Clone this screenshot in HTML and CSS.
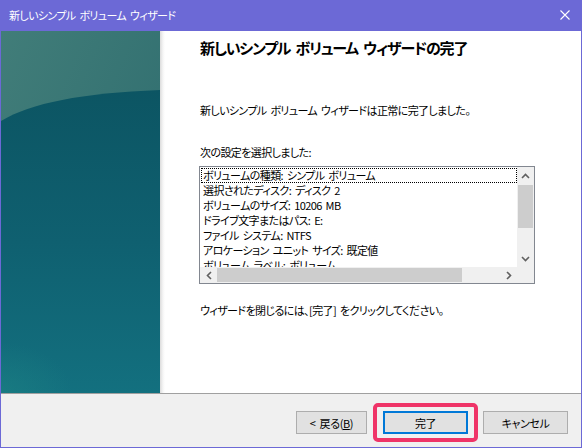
FILE: index.html
```html
<!DOCTYPE html>
<html lang="ja">
<head>
<meta charset="utf-8">
<link rel="stylesheet" href="styles.css">
</head>
<body>
<div class="window">
  <div class="titlebar">
    <span class="title">新しいシンプル ボリューム ウィザード</span>
    <svg class="close" width="10" height="10" viewBox="0 0 10 10"><path d="M0.5 0.5 L9.5 9.5 M9.5 0.5 L0.5 9.5" stroke="#fff" stroke-width="1.1" fill="none"/></svg>
  </div>
  <div class="main">
    <div class="side">
      <svg class="side-art" width="159" height="362" viewBox="0 0 159 362" preserveAspectRatio="none">
        <defs>
          <linearGradient id="top" x1="0" y1="0" x2="1" y2="1">
            <stop offset="0" stop-color="#417d79"/>
            <stop offset="1" stop-color="#2b6a6d"/>
          </linearGradient>
          <linearGradient id="low" x1="0" y1="0" x2="0" y2="1">
            <stop offset="0" stop-color="#0c5563"/>
            <stop offset="0.5" stop-color="#0f6070"/>
            <stop offset="1" stop-color="#13707f"/>
          </linearGradient>
          <radialGradient id="glow" cx="0" cy="1" r="0.45">
            <stop offset="0" stop-color="#1e8584" stop-opacity="0.5"/>
            <stop offset="1" stop-color="#1e8584" stop-opacity="0"/>
          </radialGradient>
        </defs>
        <rect x="0" y="0" width="159" height="362" fill="url(#top)"/>
        <path d="M0 90 C 30 72, 80 62, 159 59 L159 362 L0 362 Z" fill="url(#low)"/>
        <rect x="0" y="250" width="159" height="112" fill="url(#glow)"/>
      </svg>
    </div>
    <div class="content">
      <h1 class="heading">新しいシンプル ボリューム ウィザードの完了</h1>
      <p class="done">新しいシンプル ボリューム ウィザードは正常に完了しました。</p>
      <p class="label">次の設定を選択しました:</p>
      <div class="listbox">
        <div class="list-area">
          <div class="items">
            <div class="item focus">ボリュームの種類: シンプル ボリューム</div>
            <div class="item">選択されたディスク: ディスク 2</div>
            <div class="item">ボリュームのサイズ: 10206 MB</div>
            <div class="item">ドライブ文字またはパス: E:</div>
            <div class="item">ファイル システム: NTFS</div>
            <div class="item">アロケーション ユニット サイズ: 既定値</div>
            <div class="item">ボリューム ラベル: ボリューム</div>
          </div>
          <div class="vscroll">
            <div class="arrow"><svg width="9" height="6" viewBox="0 0 9 6"><path d="M1 5 L4.5 1.5 L8 5" stroke="#606060" stroke-width="1.6" fill="none"/></svg></div>
            <div class="vtrack"><div class="vthumb"></div></div>
            <div class="arrow"><svg width="9" height="6" viewBox="0 0 9 6"><path d="M1 1 L4.5 4.5 L8 1" stroke="#606060" stroke-width="1.6" fill="none"/></svg></div>
          </div>
        </div>
        <div class="hscroll">
          <div class="harrow"><svg width="6" height="9" viewBox="0 0 6 9"><path d="M5 1 L1.5 4.5 L5 8" stroke="#606060" stroke-width="1.6" fill="none"/></svg></div>
          <div class="htrack"><div class="hthumb"></div></div>
          <div class="harrow"><svg width="6" height="9" viewBox="0 0 6 9"><path d="M1 1 L4.5 4.5 L1 8" stroke="#606060" stroke-width="1.6" fill="none"/></svg></div>
          <div class="corner"></div>
        </div>
      </div>
      <p class="close-hint">ウィザードを閉じるには、[完了] をクリックしてください。</p>
    </div>
  </div>
  <div class="footer">
    <button class="btn back">&lt; 戻る(<u>B</u>)</button>
    <div class="finish-wrap">
      <button class="btn finish">完了</button>
      <div class="highlight"></div>
    </div>
    <button class="btn cancel">キャンセル</button>
  </div>
</div>
</body>
</html>
```
FILE: styles.css
```css
* { box-sizing: border-box; }
html, body { margin: 0; padding: 0; }
body {
  width: 582px;
  height: 448px;
  font-family: "Noto Sans CJK JP", "Noto Sans", sans-serif;
  font-feature-settings: "palt";
  font-size: 11px;
  letter-spacing: -0.6px;
  word-spacing: 2px;
  color: #000;
  background: #fff;
}
.window {
  width: 582px;
  height: 448px;
  border: 1px solid #6c69d6;
  border-top: 0;
  display: flex;
  flex-direction: column;
}
.titlebar {
  height: 31px;
  background: #6c69d6;
  display: flex;
  align-items: center;
  justify-content: space-between;
  padding: 0 9px 1px 9px;
  margin: 0 -1px;
}
.title { color: #fff; font-size: 11px; }
.close { margin-right: 3px; }
.main {
  height: 362px;
  display: flex;
}
.side {
  width: 159px;
  flex: none;
  position: relative;
}
.side-art { display: block; }
.content {
  flex: 1;
  padding: 6px 0 0 40px;
  background: linear-gradient(to right, #dcdcdc 0, #f6f6f6 3px, #fff 5px);
}
.heading {
  margin: 0;
  font-size: 15px;
  line-height: 22px;
  font-weight: bold;
  letter-spacing: -1.2px;
  word-spacing: 3px;
}
.done { margin: 43px 0 0; line-height: 16px; }
.label { margin: 26px 0 0; line-height: 16px; }
.listbox {
  margin-top: 6px;
  margin-left: -1px;
  width: 336px;
  height: 118px;
  border: 1px solid #828790;
  background: #fff;
  display: flex;
  flex-direction: column;
}
.list-area { display: flex; height: 100px; }
.items {
  flex: 1;
  padding: 1px 0 0 1px;
  overflow: hidden;
}
.item {
  height: 15px;
  line-height: 15px;
  padding-left: 2px;
  white-space: nowrap;
  overflow: hidden;
}
.item.focus {
  outline: 1px dotted #000;
  outline-offset: -1px;
}
.vscroll {
  width: 17px;
  flex: none;
  background: #f0f0f0;
  display: flex;
  flex-direction: column;
}
.arrow {
  height: 17px;
  display: flex;
  align-items: center;
  justify-content: center;
  flex: none;
}
.vtrack { flex: 1; padding: 1px 1px 0 1px; }
.vthumb { height: 43px; background: #cdcdcd; }
.hscroll {
  height: 16px;
  background: #f0f0f0;
  display: flex;
}
.harrow {
  width: 17px;
  display: flex;
  align-items: center;
  justify-content: center;
  flex: none;
}
.htrack { flex: 1; padding: 1px 0 1px 0; }
.hthumb { width: 245px; height: 100%; background: #cdcdcd; }
.corner { width: 17px; background: #f0f0f0; }
.close-hint { margin: 18px 0 0; line-height: 16px; }
.footer {
  height: 54px;
  background: #f0f0f0;
  border-top: 1px solid #a0a0a0;
  display: flex;
  align-items: flex-start;
  padding: 17px 13px 0 0;
  justify-content: flex-end;
}
.btn {
  font-family: inherit;
  font-feature-settings: "palt";
  font-size: 11px;
  letter-spacing: -0.4px;
  word-spacing: 2px;
  color: #000;
  height: 23px;
  background: #e1e1e1;
  border: 1px solid #adadad;
  padding: 0;
  margin: 0;
  line-height: 20px;
}
.back { width: 71px; margin-right: 16px; }
.finish-wrap { position: relative; margin-right: 15px; }
.finish { width: 85px; border: 2px solid #0078d7; display: block; }
.cancel { width: 85px; }
.highlight {
  position: absolute;
  left: -10px;
  top: -8px;
  right: -10px;
  bottom: -8px;
  border: 4px solid #ef3468;
  border-radius: 5px;
}
```
